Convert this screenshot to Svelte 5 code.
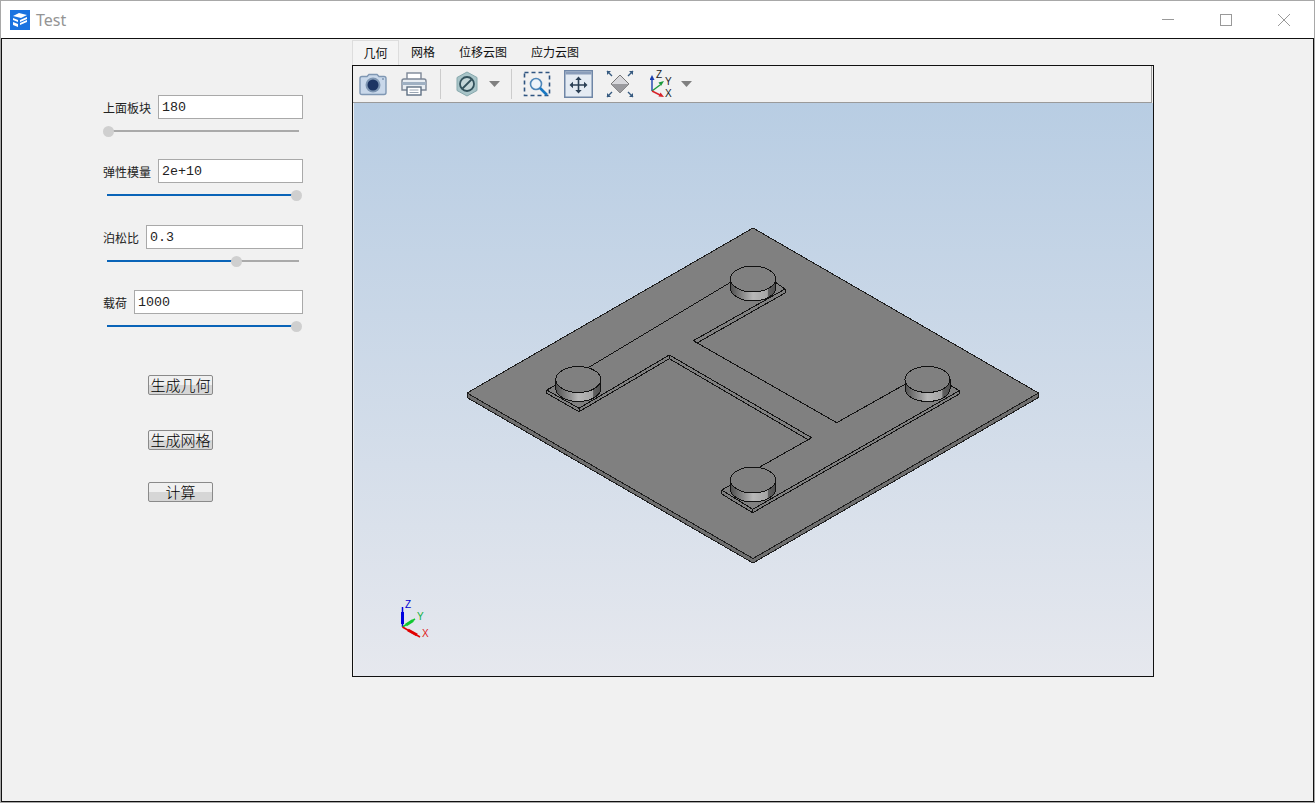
<script>
  // model is written in page coords, the canvas starts at (354, 103)
  const pts = (list) => list.map(([x, y]) => `${x - 354},${y - 103}`).join(" ");

  const params = [
    { label: "上面板块", value: "180", pct: 0 },
    { label: "弹性模量", value: "2e+10", pct: 100 },
    { label: "泊松比", value: "0.3", pct: 68.6 },
    { label: "载荷", value: "1000", pct: 100 },
  ];
  const buttons = ["生成几何", "生成网格", "计算"];
  const tabs = ["几何", "网格", "位移云图", "应力云图"];
  const thumbAt = (pct) => 1 + 1.88 * pct;

  const plate = [[753, 228], [1038.5, 393], [753, 558.5], [467, 393]];
  const plateEdge = [[467, 393], [753, 558.5], [1038.5, 393], [1038.5, 397.5], [753, 563], [467, 397.5]];

  // outline of the raised H, top face and the visible walls
  const hLines = [
    [[586, 369], [731, 282]],
    [[775, 282], [785, 289], [693.3, 340.7], [836.7, 422.7], [905, 384.3]],
    [[785, 289], [785, 293], [697, 343]],
    [[556, 385], [546.7, 390], [579, 408.3], [669.3, 355], [811.7, 437.7], [759.3, 467.3]],
    [[546.7, 390], [546.7, 393.3], [579, 411.7], [669.3, 358.7], [808, 439.7]],
    [[579, 408.3], [579, 411.7]],
    [[669.3, 355], [669.3, 358.7]],
    [[950, 385], [959.3, 390.7], [752.7, 509.3], [721.7, 490], [730.7, 485]],
    [[959.3, 390.7], [959.3, 394], [752.7, 512.7], [721.7, 494], [721.7, 490]],
    [[752.7, 509.3], [752.7, 512.7]],
  ];

  const bolts = [
    { x: 578.3, y: 379.5 },
    { x: 753, y: 279 },
    { x: 927.5, y: 379.5 },
    { x: 753, y: 480 },
  ];
</script>

<div class="window">
  <header class="titlebar">
    <svg class="logo" width="20" height="20" viewBox="0 0 20 20">
      <rect width="20" height="20" fill="#1a73e0" />
      <path d="M3 6l6-3 8 2-6 3zM3 8l5 2v2l-5-2zM3 12l5 2v3l-5-2z" fill="#fff" />
      <path d="M10 10l7-3v2l-7 3zM10 13l7-3v2l-7 3z" fill="#fff" />
    </svg>
    <span class="title">Test</span>
    <div class="winbtns">
      <svg width="14" height="14" viewBox="0 0 14 14"><path d="M1 6.500h12" stroke="#999" /></svg>
      <svg width="14" height="14" viewBox="0 0 14 14"><rect x="1.500" y="1.500" width="11" height="11" fill="none" stroke="#999" /></svg>
      <svg width="14" height="14" viewBox="0 0 14 14"><path d="M1 1l12 12M13 1L1 13" stroke="#999" /></svg>
    </div>
  </header>

  <main class="content">
    <aside class="side">
      {#each params as p}
        <div class="param">
          <div class="row">
            <span class="lbl">{p.label}</span>
            <input class="field" value={p.value} readonly />
          </div>
          <div class="slider">
            <div class="track">
              <div class="fill" style="width: {thumbAt(p.pct)}px"></div>
              <div class="thumb" style="left: {thumbAt(p.pct)}px"></div>
            </div>
          </div>
        </div>
      {/each}
      <div class="actions">
        {#each buttons as b}
          <button class="btn">{b}</button>
        {/each}
      </div>
    </aside>

    <section class="pane">
      <nav class="tabs">
        {#each tabs as t, i}
          <span class="tab" class:on={i === 0}>{t}</span>
        {/each}
      </nav>
      <div class="viewer">
        <div class="toolbar">
          <!-- camera -->
          <svg class="tool" width="30" height="26" viewBox="0 0 30 26">
            <path d="M2 7.500q0-2 2-2h5l2-2h8l2 2h5q2 0 2 2v14q0 2-2 2H4q-2 0-2-2z" fill="#c9d8ea" stroke="#7f97b3" stroke-width="1.400" />
            <circle cx="15" cy="14" r="7.500" fill="#7f97b3" />
            <circle cx="15" cy="14" r="5.500" fill="#1d3563" />
            <circle cx="25" cy="8" r="1" fill="#7f97b3" />
          </svg>
          <!-- printer -->
          <svg class="tool" width="28" height="26" viewBox="0 0 28 26">
            <rect x="7" y="2" width="14" height="8" fill="#fff" stroke="#7c8796" stroke-width="1.400" />
            <path d="M2 10q0-2 2-2h20q2 0 2 2v9H2z" fill="#e8edf2" stroke="#7c8796" stroke-width="1.400" />
            <rect x="2" y="11" width="24" height="3" fill="#9fb0c2" />
            <rect x="7" y="16" width="14" height="8" fill="#fff" stroke="#5f7083" stroke-width="1.400" />
            <path d="M9.500 19h9M9.500 21.500h9" stroke="#9aa6b3" />
          </svg>
          <i class="sep"></i>
          <!-- no-visibility hex -->
          <svg class="tool hex" width="26" height="26" viewBox="0 0 26 26">
            <path d="M13 1l10 5.500v13L13 25 3 19.500v-13z" fill="#a8c4c8" stroke="#87a9ad" />
            <circle cx="13" cy="13" r="7" fill="#c4d6d8" stroke="#33525c" stroke-width="1.800" />
            <path d="M8.500 17.500l9-9" stroke="#33525c" stroke-width="1.800" />
          </svg>
          <svg class="caret" width="11" height="6" viewBox="0 0 11 6"><path d="M0 0h11L5.500 6z" fill="#808080" /></svg>
          <i class="sep second"></i>
          <!-- zoom window -->
          <svg class="tool wide" width="28" height="26" viewBox="0 0 28 26">
            <rect x="1.500" y="1.500" width="25" height="23" fill="none" stroke="#2f5480" stroke-width="1.600" stroke-dasharray="4 3" />
            <circle cx="13" cy="13" r="5.500" fill="#eef4fa" stroke="#4e86b8" stroke-width="1.600" />
            <path d="M17 17l7 7" stroke="#1a78c2" stroke-width="2.600" />
          </svg>
          <!-- pan -->
          <svg class="tool wide" width="29" height="28" viewBox="0 0 29 28">
            <rect x="0.750" y="0.750" width="27.500" height="26.500" fill="#e4ebf3" stroke="#6f86a6" stroke-width="1.500" />
            <rect x="1.500" y="1.500" width="26" height="3" fill="#8a9dba" />
            <path d="M14.500 9v12M8 15h13" stroke="#2b4056" stroke-width="1.600" />
            <path d="M14.500 6.500l-3.200 3.500h6.400zM14.500 23.500l-3.200-3.500h6.400zM5.500 15l3.500-3.200v6.400zM23.500 15l-3.500-3.200v6.400z" fill="#2b4056" />
          </svg>
          <!-- fit all -->
          <svg class="tool fit" width="28" height="28" viewBox="0 0 28 28">
            <path d="M14 5l9 9-9 9-9-9z" fill="#d8d8dc" stroke="#777" />
            <path d="M5 14h18l-9 9z" fill="#9a9a9e" />
            <path d="M1 1l5 5M27 1l-5 5M1 27l5-5M27 27l-5-5" stroke="#365a80" stroke-width="1.400" />
            <path d="M1 1h4l-4 4zM27 1h-4l4 4zM1 27h4l-4-4zM27 27h-4l4-4z" fill="#365a80" />
          </svg>
          <!-- view axes -->
          <svg class="tool axes" width="26" height="28" viewBox="0 0 26 28">
            <path d="M2 9v12" stroke="#1b3fae" stroke-width="1.400" />
            <path d="M2 5L-.5 10h5z" fill="#1b3fae" />
            <path d="M2 21l8-6" stroke="#1c9a3c" stroke-width="1.400" />
            <path d="M14 11l-5.500 1.500 2.500 3.500z" fill="#1c9a3c" />
            <path d="M2 21l8 4" stroke="#d8232a" stroke-width="1.400" />
            <path d="M14 27l-5.500-.5 2-4z" fill="#d8232a" />
            <text x="6" y="8" class="axt">Z</text>
            <text x="15" y="15" class="axt">Y</text>
            <text x="15" y="27" class="axt">X</text>
          </svg>
          <svg class="caret" width="11" height="6" viewBox="0 0 11 6"><path d="M0 0h11L5.500 6z" fill="#808080" /></svg>
        </div>

        <div class="canvas">
          <svg width="799" height="573" viewBox="0 0 799 573">
            <defs>
              <linearGradient id="side" x1="0" x2="1" y1="0" y2="0">
                <stop offset="0" stop-color="#505050" />
                <stop offset="0.5" stop-color="#b8b8b8" />
                <stop offset="0.82" stop-color="#a4a4a4" />
                <stop offset="0.84" stop-color="#606060" />
                <stop offset="1" stop-color="#505050" />
              </linearGradient>
            </defs>

            <g class="model">
              <polygon points={pts(plateEdge)} fill="#6f6f6f" stroke="#1c1c1c" />
              <polygon points={pts(plate)} fill="#808080" stroke="#1c1c1c" />

              {#each hLines as line}
                <polyline points={pts(line)} fill="none" stroke="#111" />
              {/each}

              {#each bolts as b}
                <g transform="translate({b.x - 354} {b.y - 103})">
                  <path d="M-22.500 0v9a22.500 13 0 0 0 45 0V0z" fill="url(#side)" stroke="#111" />
                  <ellipse cx="0" cy="0" rx="22.500" ry="13" fill="#808080" stroke="#111" />
                </g>
              {/each}
            </g>

            <!-- orientation triad -->
            <path d="M48.500 524v-20" stroke="#0000e0" stroke-width="1.500" />
            <path d="M48.500 521v-12" stroke="#0000e0" stroke-width="3" />
            <path d="M48.500 524l12.500-8" stroke="#10c830" stroke-width="1.500" />
            <path d="M52 522l7-4.500" stroke="#10c830" stroke-width="3" />
            <path d="M48.500 524l17.500 10" stroke="#e00000" stroke-width="1.500" />
            <path d="M54 527l9 5" stroke="#e00000" stroke-width="3" />
            <text x="51" y="505" class="tri" fill="#0000d0">Z</text>
            <text x="63" y="517" class="tri" fill="#10b040">Y</text>
            <text x="68" y="534" class="tri" fill="#e02020">X</text>
          </svg>
        </div>
      </div>
    </section>
  </main>
</div>

<style>
  :global(body) {
    margin: 0;
    background: #fff;
    font-family: "Liberation Sans", "Noto Sans CJK SC", sans-serif;
  }

  .window {
    width: 1315px;
    height: 803px;
    box-sizing: border-box;
    border: 1px solid #a8a8a8;
    display: flex;
    flex-direction: column;
    overflow: hidden;
  }

  .titlebar {
    height: 37px;
    flex-shrink: 0;
    display: flex;
    align-items: center;
    background: #fff;
    padding-left: 9px;
    box-sizing: border-box;
  }
  .logo {
    margin-right: 6px;
  }
  .title {
    font-family: "Noto Sans", sans-serif;
    font-size: 16px;
    color: #949494;
  }
  .winbtns {
    margin-left: auto;
    display: flex;
    gap: 44px;
    padding-right: 23px;
  }

  .content {
    flex: 1;
    border: 1px solid #111;
    background: #f1f1f1;
    display: flex;
    min-height: 0;
  }

  .side {
    width: 350px;
    flex-shrink: 0;
    box-sizing: border-box;
    padding: 56px 0 0 101px;
  }
  .param {
    width: 200px;
    height: 65px;
  }
  .param:nth-child(1) {
    height: 64px;
  }
  .param:nth-child(2) {
    height: 66px;
  }
  .row {
    display: flex;
    align-items: center;
    height: 24px;
  }
  .lbl {
    font-size: 12px;
    color: #222;
    white-space: nowrap;
    margin-right: 7px;
  }
  .field {
    flex: 1;
    min-width: 0;
    height: 24px;
    box-sizing: border-box;
    border: 1px solid #a9a9a9;
    background: #fff;
    padding: 1px 0 0 3px;
    font-family: "Liberation Mono", monospace;
    font-size: 13.33px;
    color: #222;
    outline: none;
  }
  .slider {
    margin: 11px 4px 0 4px;
    height: 2px;
  }
  .track {
    position: relative;
    height: 2px;
    background: #aaa;
  }
  .fill {
    height: 2px;
    background: #0a64b8;
  }
  .thumb {
    position: absolute;
    top: -4.500px;
    width: 11px;
    height: 11px;
    margin-left: -5.500px;
    border-radius: 50%;
    background: #cfcfcf;
  }

  .actions {
    display: flex;
    flex-direction: column;
    align-items: flex-start;
    padding: 20px 0 0 45px;
  }
  .btn {
    width: 65px;
    height: 20px;
    box-sizing: border-box;
    padding: 0;
    border: 1px solid #8a8a8a;
    border-radius: 2px;
    background: linear-gradient(#f0f0f0 50%, #d6d6d6 50%);
    font-family: "Noto Sans CJK SC", sans-serif;
    font-size: 15px;
    font-weight: 300;
    line-height: 16px;
    color: #000;
    margin-bottom: 35px;
  }
  .btn:last-child {
    margin-top: -3px;
  }

  .pane {
    width: 802px;
    display: flex;
    flex-direction: column;
    height: 638px;
  }
  .tabs {
    height: 26px;
    display: flex;
    align-items: flex-end;
    font-size: 12px;
    color: #111;
  }
  .tab {
    height: 25px;
    line-height: 27px;
    padding: 0 12px;
  }
  .tab.on {
    box-sizing: border-box;
    width: 47px;
    padding: 0;
    text-align: center;
    border: 1px solid #ddd;
    border-bottom: 0;
    background: #f4f4f4;
  }
  .viewer {
    flex: 1;
    border: 1px solid #111;
    display: flex;
    flex-direction: column;
    min-height: 0;
  }
  .toolbar {
    height: 37px;
    box-sizing: border-box;
    flex-shrink: 0;
    display: flex;
    align-items: center;
    padding-left: 5px;
    border-bottom: 1px solid #9a9a9a;
    border-right: 1px solid #9a9a9a;
    margin-right: 1px;
  }
  .tool {
    margin-right: 12px;
  }
  .tool.hex {
    margin-right: 9px;
  }
  .tool.wide {
    margin-right: 13px;
  }
  .tool.fit {
    margin-right: 16px;
  }
  .tool.axes {
    margin-right: 5px;
  }
  .sep {
    width: 1px;
    height: 30px;
    background: #ccc;
    margin-right: 13px;
  }
  .sep.second {
    margin-left: 11px;
    margin-right: 11px;
  }
  .axt {
    font-size: 10px;
    fill: #222;
    font-family: "Liberation Sans", sans-serif;
  }
  .tri {
    font-size: 10px;
    font-family: "Liberation Sans", sans-serif;
  }
  .canvas {
    flex: 1;
    margin-left: 1px;
    background: linear-gradient(#b8cde3, #e6e8ee);
    overflow: hidden;
  }
  .canvas svg {
    display: block;
  }
  .model {
    shape-rendering: crispEdges;
  }
</style>
